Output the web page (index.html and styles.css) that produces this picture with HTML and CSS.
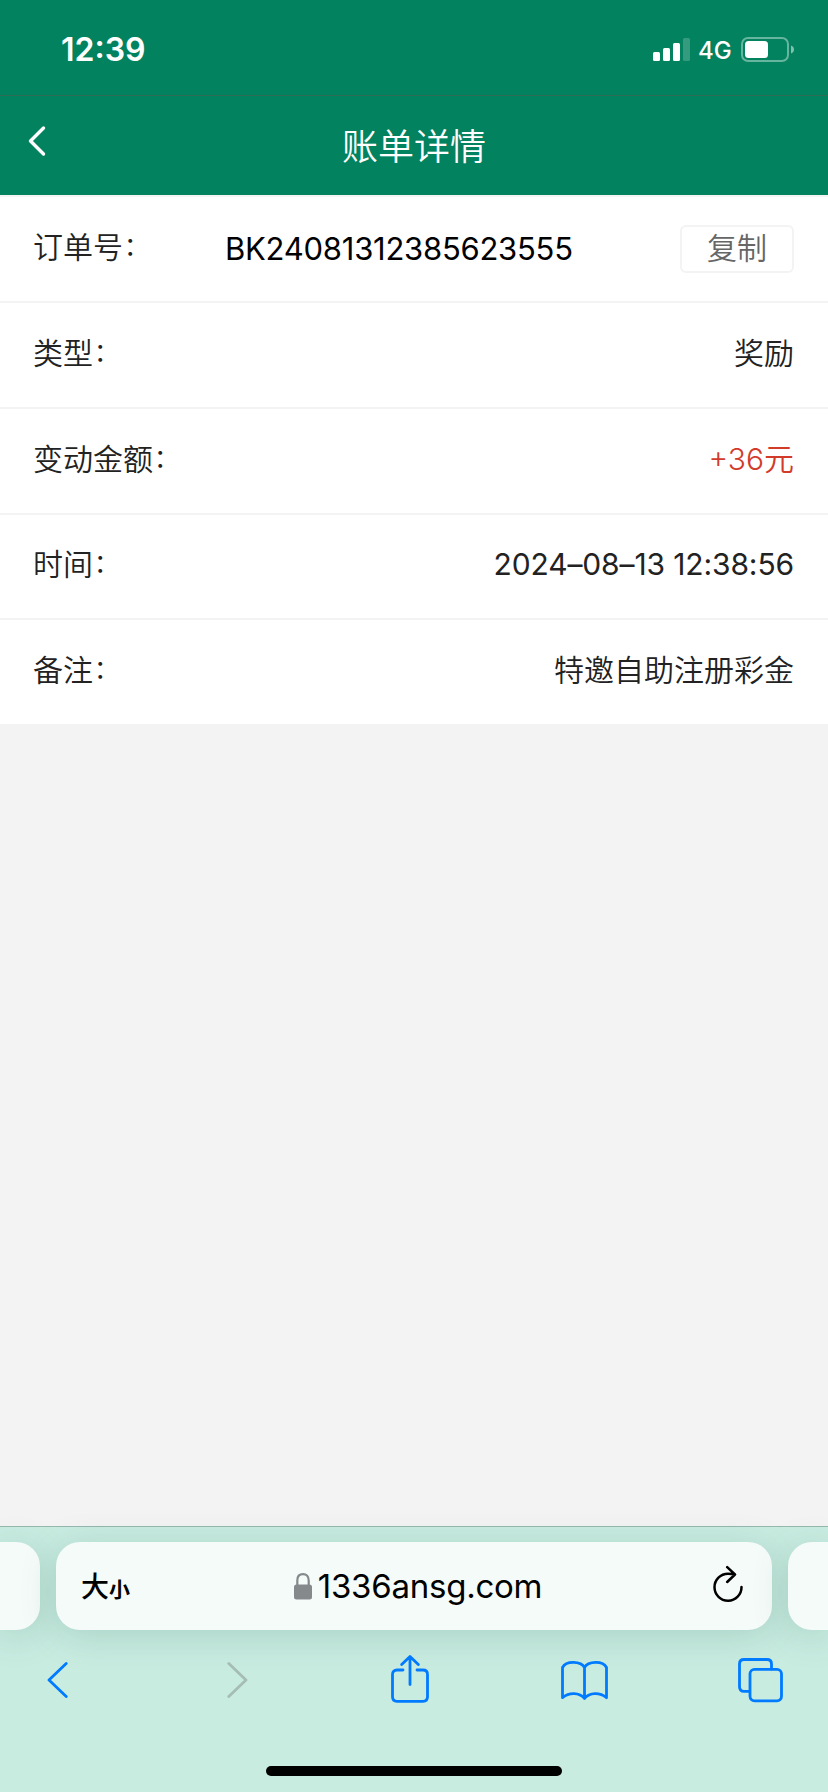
FILE: index.html
```html
<!DOCTYPE html>
<html lang="zh-CN">
<head>
<meta charset="utf-8">
<title>账单详情</title>
<link rel="stylesheet" href="styles.css">
</head>
<body>
<div class="screen">
  <div class="status">
    <span class="time">12:39</span>
    <div class="indicators">
      <svg class="signal" width="37" height="23" viewBox="0 0 37 23" fill="#fff">
        <rect x="0" y="14" width="7" height="9" rx="1.5"/>
        <rect x="10" y="10" width="7" height="13" rx="1.5"/>
        <rect x="20" y="5" width="7" height="18" rx="1.5"/>
        <rect x="30" y="0" width="7" height="23" rx="1.5" opacity=".2"/>
      </svg>
      <span class="network">4G</span>
      <svg class="battery" width="53" height="25" viewBox="0 0 53 25">
        <rect x="1" y="1" width="46" height="23" rx="6" fill="none" stroke="#fff" stroke-opacity=".4" stroke-width="2"/>
        <rect x="4" y="4" width="23" height="17" rx="3.5" fill="#fff"/>
        <path d="M50 8.5c4 1.2 4 6.800 0 8z" fill="#fff" fill-opacity=".5"/>
      </svg>
    </div>
  </div>
  <header class="header">
    <svg class="header-back" width="18" height="32" viewBox="0 0 18 32" fill="none" stroke="#fff" stroke-width="3.400" stroke-linecap="round" stroke-linejoin="round"><path d="M15.500 3 2.500 16l13 13"/></svg>
    <h1 class="title">账单详情</h1>
  </header>
  <main class="details">
    <div class="row row-order">
      <span class="label">订单号<span class="colon">：</span></span>
      <span class="order">BK24081312385623555</span>
      <button class="copy">复制</button>
    </div>
    <div class="row"><span class="label">类型<span class="colon">：</span></span><span class="value">奖励</span></div>
    <div class="row"><span class="label">变动金额<span class="colon">：</span></span><span class="value amount">+36元</span></div>
    <div class="row row-time"><span class="label">时间<span class="colon">：</span></span><span class="value date">2024–08–13 12:38:56</span></div>
    <div class="row row-note"><span class="label">备注<span class="colon">：</span></span><span class="value">特邀自助注册彩金</span></div>
  </main>
  <footer class="browser">
    <div class="tabs">
      <div class="card card-prev"></div>
      <div class="card address">
        <span class="text-size">大<small>小</small></span>
        <span class="site">
          <svg class="lock" width="18" height="27" viewBox="0 0 18 27"><path d="M3.300 13V7.500C3.300 3.500 5.500 1.200 9 1.200s5.700 2.300 5.700 6.300V13" fill="none" stroke="#85898b" stroke-width="2.200"/><rect y="11.500" width="18" height="15" rx="2.500" fill="#85898b"/></svg>
          <span class="domain">1336ansg.com</span>
        </span>
        <svg class="reload" width="30" height="37" viewBox="0 0 30 37" fill="none" stroke="#000" stroke-width="2.500" stroke-linecap="round" stroke-linejoin="round"><path d="M28.500 22A13.500 13.500 0 1 1 15 8.700q4 0 7 .7M14.200 2.200l7.800 7.300-7.800 7.500"/></svg>
      </div>
      <div class="card card-next"></div>
    </div>
    <nav class="tools">
      <svg width="21" height="48" viewBox="0 0 21 48"><path d="M19.200 8.500 2 25l17.200 16.500"/></svg>
      <svg class="disabled" width="21" height="48" viewBox="0 0 21 48"><path d="M1.800 8.500 19 25 1.800 41.500"/></svg>
      <svg width="38" height="48" viewBox="0 0 38 48"><path d="M12 15H6q-4.500 0-4.500 4.500v22.300q0 4.500 4.500 4.500h26q4.500 0 4.500-4.500V19.500Q36.500 15 32 15h-6M19 29.500V2M10.700 9.500 19 1.500l8.300 8"/></svg>
      <svg width="47" height="48" viewBox="0 0 47 48"><path d="M23.500 12.500C20 6 5 5.500 1.500 12.500v30.200c6.500-5.500 17-5.500 22 .8 5-6.300 15.500-6.300 22-.8V12.500C42 5.500 27 6 23.500 12.500v31"/></svg>
      <svg width="45" height="48" viewBox="0 0 45 48"><path d="M11 36.300H6q-4.500 0-4.500-4.500V9Q1.500 4.500 6 4.500h23q4.500 0 4.500 4.500v5"/><rect x="12" y="14.300" width="31.500" height="31.500" rx="4.500"/></svg>
    </nav>
    <div class="home"></div>
  </footer>
</div>
</body>
</html>
```

FILE: styles.css
```css
* { box-sizing: border-box; }
body {
  margin: 0;
  font-family: Inter, "Noto Sans CJK SC", sans-serif;
}
svg { display: block; flex: none; }
.screen {
  width: 828px;
  height: 1792px;
  display: flex;
  flex-direction: column;
  background: #f3f3f3;
  overflow: hidden;
}
.status {
  height: 96px;
  flex: none;
  display: flex;
  justify-content: space-between;
  padding: 0 34px 0 61px;
  background: #03825f;
  border-bottom: 1px solid #2f6c58;
  color: #fff;
}
.time {
  font-size: 32px;
  font-weight: 600;
  line-height: 40px;
  margin-top: 30px;
}
.indicators { display: flex; align-items: flex-start; }
.signal { margin-top: 38px; }
.network {
  width: 51px;
  padding-left: 8px;
  margin-top: 36px;
  font-size: 24px;
  font-weight: 500;
  line-height: 30px;
}
.battery { margin-top: 37px; }
.header {
  height: 99px;
  flex: none;
  display: grid;
  grid-template-columns: 100px 1fr 100px;
  background: #03825f;
  color: #fff;
}
.header-back { margin: 29px 0 0 28px; }
.title {
  margin: 0;
  padding-top: 26px;
  font-size: 36px;
  font-weight: 350;
  line-height: 50px;
  text-align: center;
}
.details { flex: none; background: #fff; border-top: 2px solid #f4f4f4; }
.row {
  height: 106px;
  display: flex;
  align-items: center;
  justify-content: space-between;
  padding: 0 34px 4px 33px;
  border-bottom: 2px solid #f3f3f3;
  color: #222;
  font-size: 30px;
  font-weight: 350;
  line-height: 44px;
}
.row-time { height: 105px; padding-bottom: 5px; }
.row-note { height: 104px; border-bottom: 0; }
.label { flex: none; }
.colon {
  display: inline-block;
  margin-left: 1px;
  font-family: "Noto Sans CJK SC", sans-serif;
  font-size: 25px;
  font-weight: 400;
  line-height: 25px;
  vertical-align: 3px;
}
.row-order { padding-bottom: 0; }
.row-order .label { width: 120px; padding-bottom: 4px; }
.order {
  margin-left: 72px;
  color: #000;
  font-size: 31px;
  font-weight: 400;
  letter-spacing: -.25px;
  white-space: nowrap;
}
.copy {
  width: 114px;
  height: 48px;
  margin-left: auto;
  padding: 0 0 2px;
  border: 2px solid #f3f3f3;
  border-radius: 6px;
  background: #fff;
  color: #666;
  font: inherit;
  line-height: 40px;
}
.amount { color: #d23a2a; }
.date { font-weight: 400; letter-spacing: -.12px; }
.browser {
  height: 266px;
  flex: none;
  margin-top: auto;
  display: flex;
  flex-direction: column;
  background: #c9ece1;
  border-top: 1px solid #98b7ae;
}
.tabs { display: flex; gap: 16px; padding-top: 15px; }
.card {
  height: 88px;
  background: #f5fbf9;
  box-shadow: 0 6px 36px rgba(30, 90, 70, .18);
}
.card-prev { width: 40px; border-radius: 0 24px 24px 0; }
.card-next { width: 40px; border-radius: 24px 0 0 24px; }
.address {
  width: 716px;
  display: flex;
  align-items: center;
  justify-content: space-between;
  padding: 0 29px 0 25px;
  border-radius: 24px;
}
.text-size { padding-top: 4px; font-size: 28px; font-weight: 500; line-height: 40px; }
.text-size small { font-size: 21px; font-weight: 700; }
.site { display: flex; align-items: center; gap: 6px; margin-right: 7px; }
.domain { font-size: 33px; line-height: 44px; letter-spacing: -.25px; }
.reload { margin-top: -6px; }
.tools {
  display: grid;
  grid-template-columns: 180px 164px 170px 177px 45px;
  padding: 25px 0 0 47px;
}
.tools svg {
  fill: none;
  stroke: #007aff;
  stroke-width: 2.800;
  stroke-linecap: round;
  stroke-linejoin: round;
}
.tools .disabled { stroke: #a6bdb6; }
.home {
  width: 296px;
  height: 10px;
  margin: auto auto 16px;
  border-radius: 5px;
  background: #000;
}
```
